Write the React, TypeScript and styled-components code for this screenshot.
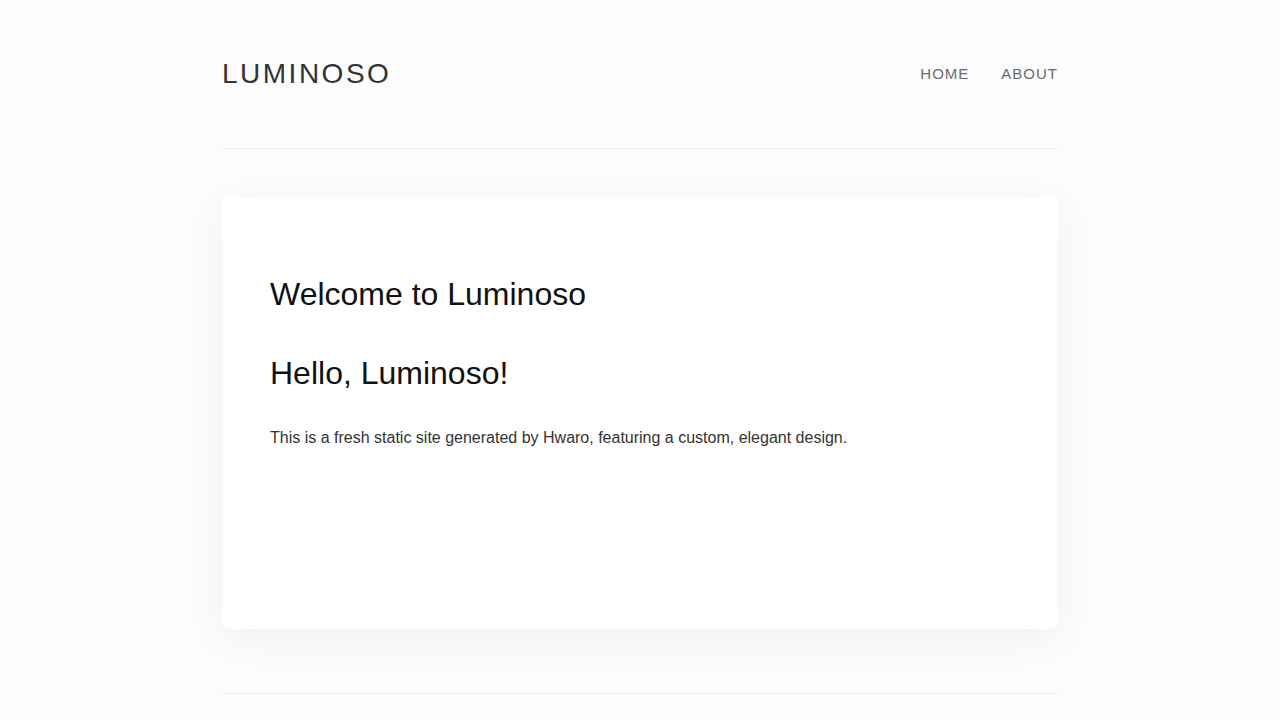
import React from 'react'
import styled, { createGlobalStyle } from 'styled-components'

const GlobalStyle = createGlobalStyle`
    html, body {
        margin: 0;
        padding: 0;
        background: #fcfcfc;
        font-family: "Liberation Sans", Arial, sans-serif;
        color: #222;
    }
`

const App: React.FC = () => {
    return (
        <>
            <GlobalStyle />
            <StPage>
                <StHeader>
                    <StLogo>LUMINOSO</StLogo>
                    <StNav>
                        <StNavLink href="#">Home</StNavLink>
                        <StNavLink href="#">About</StNavLink>
                    </StNav>
                </StHeader>
                <StMain>
                    <StCard>
                        <StTitle>Welcome to Luminoso</StTitle>
                        <StHeading>Hello, Luminoso!</StHeading>
                        <StText>This is a fresh static site generated by Hwaro, featuring a custom, elegant design.</StText>
                    </StCard>
                </StMain>
                <StFooter />
            </StPage>
        </>
    )
}

const StPage = styled.div`
    max-width: 836px;
    margin: 0 auto;
`

const StHeader = styled.header`
    display: flex;
    align-items: center;
    justify-content: space-between;
    height: 52px;
    padding: 48px 0;
    border-bottom: 1px solid #ebebeb;
`

const StLogo = styled.div`
    font-size: 28px;
    letter-spacing: 2.5px;
    color: #333;
    font-weight: 400;
`

const StNav = styled.nav`
    display: flex;
    gap: 32px;
    padding-bottom: 2px;
`

const StNavLink = styled.a`
    font-size: 15px;
    letter-spacing: 1px;
    text-transform: uppercase;
    color: #6a6a6a;
    text-decoration: none;
`

const StMain = styled.main`
    padding: 48px 0 64px;
`

const StCard = styled.article`
    box-sizing: border-box;
    min-height: 432px;
    padding: 78px 48px 48px;
    background: #fff;
    border-radius: 8px;
    box-shadow: 0 10px 40px rgba(0, 0, 0, 0.05);
`

const StTitle = styled.h1`
    margin: 0 0 41px;
    font-size: 32px;
    line-height: 38px;
    font-weight: 400;
    color: #111;
`

const StHeading = styled.h2`
    margin: 0 0 33px;
    font-size: 32px;
    line-height: 38px;
    font-weight: 400;
    color: #111;
`

const StText = styled.p`
    margin: 0;
    font-size: 16px;
    line-height: 26px;
    color: #333;
`

const StFooter = styled.footer`
    border-top: 1px solid #ebebeb;
    height: 60px;
`

export default App
